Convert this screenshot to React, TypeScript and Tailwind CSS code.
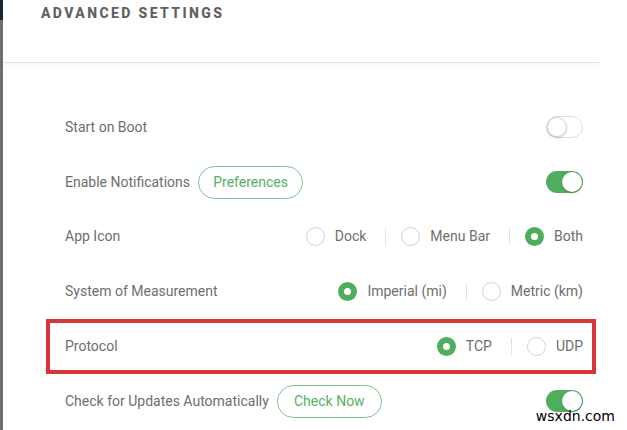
import type { ReactNode } from 'react'

const font = { fontFamily: 'Roboto, "Liberation Sans", sans-serif' }

function Toggle({ on }: { on: boolean }) {
  return on ? (
    <div className="w-[37px] h-[22px] rounded-full bg-[#4fae5e] flex items-center justify-end pr-[1px]">
      <div className="w-[20px] h-[20px] rounded-full bg-white shadow-[0_1px_2px_rgba(0,0,0,0.25)]" />
    </div>
  ) : (
    <div className="w-[37px] h-[22px] rounded-full bg-white border border-[#dedede] flex items-center">
      <div className="w-[20px] h-[20px] rounded-full bg-white border border-[#d6d6d6] shadow-[0_1px_2px_rgba(0,0,0,0.2)]" />
    </div>
  )
}

function Radio({ checked, label }: { checked?: boolean; label: string }) {
  return (
    <div className="flex items-center gap-[10px]">
      {checked ? (
        <div className="w-[19px] h-[19px] rounded-full bg-[#4fae5e] flex items-center justify-center">
          <div className="w-[7px] h-[7px] rounded-full bg-white" />
        </div>
      ) : (
        <div className="w-[19px] h-[19px] rounded-full border-[1.5px] border-[#d4d4d4] bg-white" />
      )}
      <span className="text-[14px] text-[#6e6e6e]">{label}</span>
    </div>
  )
}

function RadioGroup({ options, selected }: { options: string[]; selected: string }) {
  return (
    <div className="flex items-center">
      {options.map((o, i) => (
        <div key={o} className="flex items-center">
          {i > 0 && <div className="w-px h-[17px] bg-[#e2e2e2] ml-[19px] mr-[15px]" />}
          <Radio label={o} checked={o === selected} />
        </div>
      ))}
    </div>
  )
}

function PillButton({ children }: { children: ReactNode }) {
  return (
    <button className="h-[33px] w-[105px] rounded-full border border-[#7cc48a] text-[14px] text-[#56b066] bg-white">
      {children}
    </button>
  )
}

function Row({ label, extra, right, highlight }: { label: string; extra?: ReactNode; right: ReactNode; highlight?: boolean }) {
  return (
    <div
      className={`h-[54.8px] flex items-center justify-between pl-[15px] pr-[9px] border-[4px] ${
        highlight ? 'border-[#d8353a]' : 'border-transparent'
      }`}
    >
      <div className="flex items-center gap-[8px]">
        <span className="text-[14px] text-[#6e6e6e]">{label}</span>
        {extra}
      </div>
      {right}
    </div>
  )
}

export default function App() {
  return (
    <div className="relative w-[627px] h-[430px] bg-white flex overflow-hidden" style={font}>
      <div className="w-[3px] h-full flex flex-col">
        <div className="h-[20px] bg-[#1d2733]" />
        <div className="flex-1 bg-[#6f6f6f]" />
      </div>

      <div className="w-[597px] flex flex-col">
        <div className="h-[63px] border-b border-[#e6e6e6] pl-[38px] pt-[4px] shadow-[0_3px_4px_rgba(0,0,0,0.03)]">
          <h1 className="text-[14px] leading-[18px] font-extrabold tracking-[2.4px] text-[#5e5e63]">ADVANCED SETTINGS</h1>
        </div>

        <div className="flex flex-col pt-[37px] pl-[43px] pr-[4px]">
          <Row label="Start on Boot" right={<Toggle on={false} />} />
          <Row label="Enable Notifications" extra={<PillButton>Preferences</PillButton>} right={<Toggle on />} />
          <Row label="App Icon" right={<RadioGroup options={['Dock', 'Menu Bar', 'Both']} selected="Both" />} />
          <Row
            label="System of Measurement"
            right={<RadioGroup options={['Imperial (mi)', 'Metric (km)']} selected="Imperial (mi)" />}
          />
          <Row label="Protocol" highlight right={<RadioGroup options={['TCP', 'UDP']} selected="TCP" />} />
          <Row
            label="Check for Updates Automatically"
            extra={<PillButton>Check Now</PillButton>}
            right={<Toggle on />}
          />
        </div>
      </div>

      <span
        className="absolute right-[12px] bottom-[3px] text-[14px] text-black"
        style={{ fontFamily: '"DejaVu Sans", sans-serif' }}
      >
        wsxdn.com
      </span>
    </div>
  )
}
